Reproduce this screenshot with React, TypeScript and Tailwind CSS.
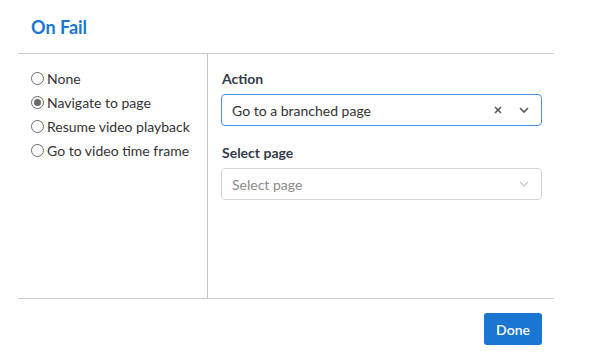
import React from "react";

function Radio({ label, checked }: { label: string; checked?: boolean }) {
  return (
    <div className="flex items-center h-[24px]">
      <span className="w-[13px] h-[13px] rounded-full border border-[#6b6b6b] flex items-center justify-center mr-[3px] shrink-0">
        {checked && <span className="w-[7px] h-[7px] rounded-full bg-[#6b6b6b]" />}
      </span>
      <span className="text-[14px] text-[#333]">{label}</span>
    </div>
  );
}

export default function App() {
  return (
    <div className="w-[599px] h-[357px] bg-white" style={{ fontFamily: "Lato, 'Liberation Sans', sans-serif" }}>
      <div className="mx-[18px] w-[536px]">
        <div className="h-[54px] border-b border-[#c8c8d0] flex items-center pl-[13px] pt-[1px]">
          <h1 className="text-[18px] font-bold text-[#1976d2]">On Fail</h1>
        </div>
        <div className="flex h-[245px] border-b border-[#c8c8d0]">
          <div className="w-[190px] border-r border-[#c8c8d0] pl-[13px] pt-[12px]">
            <Radio label="None" />
            <Radio label="Navigate to page" checked />
            <Radio label="Resume video playback" />
            <Radio label="Go to video time frame" />
          </div>
          <div className="flex-1 pl-[13px] pr-[12px] pt-[15px]">
            <div className="text-[14px] font-bold text-[#333a4a] pl-[1px] leading-[20px]">Action</div>
            <div className="mt-[5px] h-[32px] border border-[#4a90e2] rounded-[4px] flex items-center pl-[10px] pr-[12px]">
              <span className="text-[14px] text-[#333] flex-1">Go to a branched page</span>
              <svg width="8" height="8" viewBox="0 0 8 8" className="mr-[17px]">
                <path d="M1 1 L7 7 M7 1 L1 7" stroke="#555" strokeWidth="1.6" />
              </svg>
              <svg width="10" height="6" viewBox="0 0 10 6">
                <path d="M1 1 L5 5 L9 1" stroke="#555" strokeWidth="1.6" fill="none" />
              </svg>
            </div>
            <div className="mt-[17px] text-[14px] font-bold text-[#333a4a] pl-[1px] leading-[20px]">Select page</div>
            <div className="mt-[5px] h-[32px] border border-[#d6d6d6] rounded-[4px] flex items-center pl-[10px] pr-[12px]">
              <span className="text-[14px] text-[#8a8a8a] flex-1">Select page</span>
              <svg width="10" height="6" viewBox="0 0 10 6">
                <path d="M1 1 L5 5 L9 1" stroke="#c8c8c8" strokeWidth="1.2" fill="none" />
              </svg>
            </div>
          </div>
        </div>
        <div className="flex justify-end pt-[14px] pr-[12px]">
          <button className="w-[58px] h-[32px] rounded-[3px] bg-[#1976d2] text-white text-[14px] font-semibold">Done</button>
        </div>
      </div>
    </div>
  );
}
